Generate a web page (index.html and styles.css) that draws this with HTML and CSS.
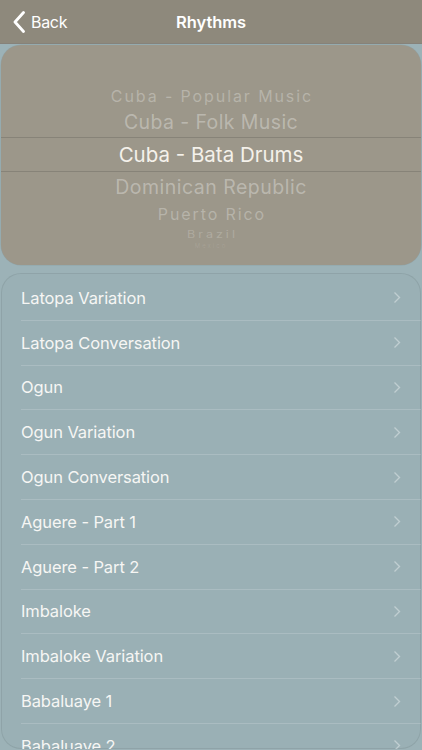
FILE: index.html
```html
<!DOCTYPE html>
<html>
<head>
<meta charset="utf-8">
<link rel="stylesheet" href="styles.css">
</head>
<body>
<header class="nav">
  <div class="back">
    <svg class="back-icon" width="12" height="22" viewBox="0 0 12 22"><path d="M10.5 1.5 L2 11 L10.5 20.5" fill="none" stroke="#fff" stroke-width="2.8" stroke-linecap="round" stroke-linejoin="round"/></svg>
    <span>Back</span>
  </div>
  <div class="title">Rhythms</div>
</header>
<section class="picker">
  <div class="wheel">
    <div class="opt o-pop">Cuba - Popular Music</div>
    <div class="opt o-folk">Cuba - Folk Music</div>
    <div class="opt o-sel">Cuba - Bata Drums</div>
    <div class="opt o-dom">Dominican Republic</div>
    <div class="opt o-pr">Puerto Rico</div>
    <div class="opt o-br">Brazil</div>
    <div class="opt o-tiny">Mexico</div>
  </div>
</section>
<section class="list">
  <div class="row"><span>Latopa Variation</span><svg class="chev" width="8" height="13" viewBox="0 0 8 13"><path d="M1.5 1.5 L6.5 6.5 L1.5 11.5" fill="none" stroke="currentColor" stroke-width="1.4"/></svg></div>
  <div class="row"><span>Latopa Conversation</span><svg class="chev" width="8" height="13" viewBox="0 0 8 13"><path d="M1.5 1.5 L6.5 6.5 L1.5 11.5" fill="none" stroke="currentColor" stroke-width="1.4"/></svg></div>
  <div class="row"><span>Ogun</span><svg class="chev" width="8" height="13" viewBox="0 0 8 13"><path d="M1.5 1.5 L6.5 6.5 L1.5 11.5" fill="none" stroke="currentColor" stroke-width="1.4"/></svg></div>
  <div class="row"><span>Ogun Variation</span><svg class="chev" width="8" height="13" viewBox="0 0 8 13"><path d="M1.5 1.5 L6.5 6.5 L1.5 11.5" fill="none" stroke="currentColor" stroke-width="1.4"/></svg></div>
  <div class="row"><span>Ogun Conversation</span><svg class="chev" width="8" height="13" viewBox="0 0 8 13"><path d="M1.5 1.5 L6.5 6.5 L1.5 11.5" fill="none" stroke="currentColor" stroke-width="1.4"/></svg></div>
  <div class="row"><span>Aguere - Part 1</span><svg class="chev" width="8" height="13" viewBox="0 0 8 13"><path d="M1.5 1.5 L6.5 6.5 L1.5 11.5" fill="none" stroke="currentColor" stroke-width="1.4"/></svg></div>
  <div class="row"><span>Aguere - Part 2</span><svg class="chev" width="8" height="13" viewBox="0 0 8 13"><path d="M1.5 1.5 L6.5 6.5 L1.5 11.5" fill="none" stroke="currentColor" stroke-width="1.4"/></svg></div>
  <div class="row"><span>Imbaloke</span><svg class="chev" width="8" height="13" viewBox="0 0 8 13"><path d="M1.5 1.5 L6.5 6.5 L1.5 11.5" fill="none" stroke="currentColor" stroke-width="1.4"/></svg></div>
  <div class="row"><span>Imbaloke Variation</span><svg class="chev" width="8" height="13" viewBox="0 0 8 13"><path d="M1.5 1.5 L6.5 6.5 L1.5 11.5" fill="none" stroke="currentColor" stroke-width="1.4"/></svg></div>
  <div class="row"><span>Babaluaye 1</span><svg class="chev" width="8" height="13" viewBox="0 0 8 13"><path d="M1.5 1.5 L6.5 6.5 L1.5 11.5" fill="none" stroke="currentColor" stroke-width="1.4"/></svg></div>
  <div class="row"><span>Babaluaye 2</span><svg class="chev" width="8" height="13" viewBox="0 0 8 13"><path d="M1.5 1.5 L6.5 6.5 L1.5 11.5" fill="none" stroke="currentColor" stroke-width="1.4"/></svg></div>
</section>
</body>
</html>
```
FILE: styles.css
```css
html, body {
  margin: 0;
  padding: 0;
}
body {
  width: 422px;
  height: 750px;
  overflow: hidden;
  background: #9cb2b7;
  font-family: Inter, "Liberation Sans", sans-serif;
  color: #fff;
}
.nav {
  height: 44px;
  background: #8e897c;
  display: flex;
  align-items: center;
  justify-content: center;
  position: relative;
  border-bottom: 1px solid #86827a;
  box-sizing: border-box;
}
.back {
  position: absolute;
  left: 13px;
  top: 0;
  height: 44px;
  display: flex;
  align-items: center;
  gap: 6px;
  font-size: 16px;
  letter-spacing: -0.3px;
}
.back-icon {
  display: block;
}
.title {
  font-size: 16.5px;
  font-weight: 600;
  letter-spacing: -0.1px;
}
.picker {
  margin: 1px 1px 0 1px;
  height: 220px;
  background: #9c978a;
  border-radius: 20px;
  box-shadow: 0 0 0 0.5px rgba(0,0,0,0.08);
  position: relative;
  overflow: hidden;
}
.wheel {
  padding-top: 40px;
  display: flex;
  flex-direction: column;
  align-items: center;
}
.opt {
  display: flex;
  align-items: center;
  justify-content: center;
  white-space: nowrap;
  width: 100%;
  box-sizing: border-box;
}
.o-pop {
  height: 22px;
  font-size: 16px;
  letter-spacing: 1.9px;
  padding-left: 1.9px;
  color: rgba(255,255,255,0.28);
}
.o-folk {
  height: 30px;
  font-size: 19.5px;
  letter-spacing: 0.4px;
  color: rgba(255,255,255,0.33);
}
.o-sel {
  height: 35px;
  font-size: 20.5px;
  color: #f4f1ea;
  border-top: 1px solid rgba(0,0,0,0.13);
  border-bottom: 1px solid rgba(0,0,0,0.13);
}
.o-dom {
  height: 30px;
  font-size: 19.5px;
  letter-spacing: 0.5px;
  color: rgba(255,255,255,0.33);
}
.o-pr {
  height: 24px;
  font-size: 16px;
  letter-spacing: 1.9px;
  padding-left: 1.9px;
  color: rgba(255,255,255,0.28);
}
.o-br {
  height: 16px;
  font-size: 12.5px;
  letter-spacing: 3px;
  padding-left: 3px;
  color: rgba(255,255,255,0.2);
  transform: scaleY(0.8);
}
.o-tiny {
  height: 6px;
  font-size: 6px;
  letter-spacing: 2px;
  color: rgba(255,255,255,0.1);
  overflow: hidden;
}
.list {
  margin: 8px 1px 0 1px;
  height: 476px;
  background: #9ab0b5;
  border-radius: 20px;
  box-shadow: inset 0 0 0 1px rgba(0,0,0,0.07);
  overflow: hidden;
  padding-top: 3px;
  box-sizing: border-box;
}
.row {
  height: 44.8px;
  margin-left: 20px;
  padding-right: 20px;
  display: flex;
  align-items: center;
  justify-content: space-between;
  font-size: 16.5px;
  letter-spacing: -0.1px;
  color: #f6f6f4;
  border-bottom: 1px solid rgba(255,255,255,0.16);
  box-sizing: border-box;
}
.chev {
  color: rgba(255,255,255,0.38);
  display: block;
}
```
